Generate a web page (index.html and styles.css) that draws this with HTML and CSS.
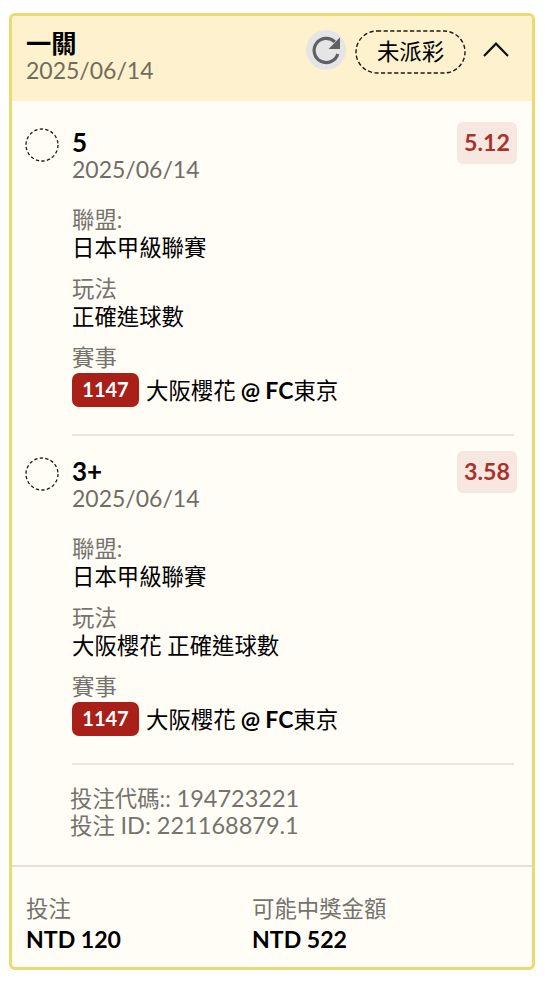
FILE: index.html
```html
<!DOCTYPE html>
<html lang="zh-Hant">
<head>
<meta charset="utf-8">
<title>一關</title>
<link rel="stylesheet" href="styles.css">
</head>
<body>
<main class="card">
  <header class="head">
    <div class="head-text">
      <h1 class="title">一關</h1>
      <div class="date">2025/06/14</div>
    </div>
    <div class="refresh">
      <svg width="40" height="40" viewBox="0 0 40 40"><path d="M31.8 24A12.1 12.1 0 1 1 28.8 11.9" fill="none" stroke="#5f6064" stroke-width="3.2"/><path d="M34 7.3V19H22.6Z" fill="#5f6064"/></svg>
    </div>
    <div class="status">
      <svg class="outline" width="111" height="44"><rect x="1" y="1" width="109" height="42" rx="21" fill="none" stroke="#1c1a12" stroke-width="1.4" stroke-dasharray="4.2 2.4"/></svg>
      <span>未派彩</span>
    </div>
    <svg class="chevron" width="28" height="18" viewBox="0 0 28 18"><path d="M2 16 14 3.7 26 16" fill="none" stroke="#111" stroke-width="2.2"/></svg>
  </header>

  <section class="leg">
    <svg class="ring" width="34" height="34"><circle cx="17" cy="17" r="16" fill="none" stroke="#1c1a18" stroke-width="1.3" stroke-dasharray="3.3 2.285"/></svg>
    <div class="leg-body">
      <div class="leg-top">
        <div>
          <h2 class="pick">5</h2>
          <div class="date">2025/06/14</div>
        </div>
        <div class="odds">5.12</div>
      </div>
      <div class="field"><div class="label">聯盟:</div><div class="value">日本甲級聯賽</div></div>
      <div class="field"><div class="label">玩法</div><div class="value">正確進球數</div></div>
      <div class="field field-match"><div class="label">賽事</div><div class="match"><span class="code">1147</span><span class="teams">大阪櫻花 <b>@ FC</b>東京</span></div></div>
    </div>
  </section>

  <section class="leg">
    <svg class="ring" width="34" height="34"><circle cx="17" cy="17" r="16" fill="none" stroke="#1c1a18" stroke-width="1.3" stroke-dasharray="3.3 2.285"/></svg>
    <div class="leg-body">
      <div class="leg-top">
        <div>
          <h2 class="pick">3+</h2>
          <div class="date">2025/06/14</div>
        </div>
        <div class="odds">3.58</div>
      </div>
      <div class="field"><div class="label">聯盟:</div><div class="value">日本甲級聯賽</div></div>
      <div class="field"><div class="label">玩法</div><div class="value">大阪櫻花 正確進球數</div></div>
      <div class="field field-match"><div class="label">賽事</div><div class="match"><span class="code">1147</span><span class="teams">大阪櫻花 <b>@ FC</b>東京</span></div></div>
    </div>
  </section>

  <section class="ids">
    <div>投注代碼:: <span class="num">194723221</span></div>
    <div>投注 <span class="num">ID: 221168879.1</span></div>
  </section>

  <footer class="foot">
    <div><div class="label">投注</div><div class="amount">NTD 120</div></div>
    <div><div class="label">可能中獎金額</div><div class="amount">NTD 522</div></div>
  </footer>
</main>
</body>
</html>
```
FILE: styles.css
```css
* { box-sizing: border-box; }

body {
  margin: 0;
  padding: 13px 12px 0 9px;
  background: #fff;
  color: #000;
  font-family: Lato, "Noto Sans CJK TC", sans-serif;
  font-size: 22.4px;
  line-height: 28px;
  white-space: nowrap;
}

h1, h2 { margin: 0; }

.card {
  height: 957px;
  border: 3px solid #ecd970;
  border-radius: 6px;
  background: #fffdf6;
  overflow: hidden;
}

.head {
  display: flex;
  align-items: flex-start;
  height: 85px;
  padding: 14px 22px 0 14px;
  background: #fdf1ce;
}

.head-text { flex: 1; }

.title {
  font-size: 25.3px;
  font-weight: 700;
  line-height: 27px;
}

.date {
  color: #6f6d68;
  font-size: 23px;
  line-height: 26px;
}

.head .date { color: #716c5c; }

.refresh {
  width: 40px;
  height: 40px;
  margin-right: 9px;
  border-radius: 50%;
  background: #e5e5e6;
}

.refresh svg { display: block; }

.status {
  position: relative;
  width: 111px;
  height: 44px;
  line-height: 44px;
  text-align: center;
}

.outline {
  position: absolute;
  left: 0;
  top: 0;
}

.chevron { margin: 10px 0 0 16px; }

.leg {
  display: flex;
  gap: 13px;
  height: 329px;
  padding: 27px 15px 0 13px;
}

.ring { flex: none; }

.leg-body { flex: 1; }

.leg-top {
  display: flex;
  justify-content: space-between;
  height: 78px;
}

.pick {
  font-size: 26px;
  font-weight: 700;
  line-height: 28px;
}

.odds {
  width: 60px;
  height: 42px;
  margin-top: -6px;
  border-radius: 6px;
  background: #f6e8e1;
  color: #a8322b;
  font-size: 23.2px;
  font-weight: 700;
  line-height: 41px;
  text-align: center;
}

.field { height: 69px; }

.label { color: #75736d; }

.field-match {
  height: 92px;
  margin-right: 3px;
  border-bottom: 2px solid #ebe7e0;
}

.match {
  display: flex;
  gap: 7px;
  margin-top: 1px;
}

.code {
  width: 67px;
  height: 34px;
  border-radius: 7px;
  background: #a82018;
  color: #fff;
  font-size: 20px;
  font-weight: 700;
  line-height: 33px;
  text-align: center;
}

.teams {
  line-height: 35px;
  word-spacing: -0.5px;
}

.teams b { font-size: 23px; }

.ids {
  height: 108px;
  padding: 26px 0 0 58px;
  border-bottom: 2px solid #e2e1dc;
  color: #75736d;
  line-height: 26px;
}

.num { font-size: 23.5px; }

.foot {
  display: grid;
  grid-template-columns: 226px 1fr;
  padding: 28px 0 0 14px;
}

.amount {
  font-size: 23.1px;
  font-weight: 700;
  line-height: 32px;
}
```
